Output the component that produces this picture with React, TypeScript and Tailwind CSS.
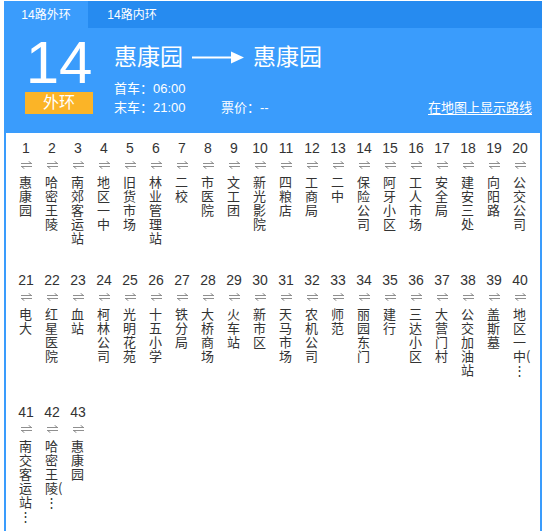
import React from "react";

const stations: { n: number; lines: string[] }[] = [
  "惠康园","哈密王陵","南郊客运站","地区一中","旧货市场","林业管理站","二校","市医院","文工团","新光影院",
  "四粮店","工商局","二中","保险公司","阿牙小区","工人市场","安全局","建安三处","向阳路","公交公司",
  "电大","红星医院","血站","柯林公司","光明花苑","十五小学","铁分局","大桥商场","火车站","新市区",
  "天马市场","农机公司","师范","丽园东门","建行","三达小区","大营门村","公交加油站","盖斯墓","@地,区,一,中(,⋮",
  "@南,交,客,运,站,⋮","@哈,密,王,陵(,⋮","惠康园",
].map((s, i) => ({
  n: i + 1,
  lines: s.startsWith("@") ? s.slice(1).split(",") : s.split(""),
}));

function Swap() {
  return (
    <svg width="11" height="8" viewBox="0 0 11 8" fill="none" stroke="#8f8f8f" strokeWidth="1">
      <path d="M0 2.5H11M10.5 2.5L7.5 0.2" />
      <path d="M11 5.5H0M0.5 5.5L3.5 7.8" />
    </svg>
  );
}

function LongArrow() {
  return (
    <svg width="52" height="13" viewBox="0 0 52 13">
      <rect x="0" y="5.5" width="42" height="2" fill="#fff" />
      <path d="M39 0.5L52 6.5L39 12.5Z" fill="#fff" />
    </svg>
  );
}

export default function App() {
  return (
    <div className="ml-[4px] mt-[1px] w-[538px] font-['Liberation_Sans','Noto_Sans_CJK_SC',sans-serif]">
      {/* tabs */}
      <div className="flex h-[27px] bg-[#268bf0] text-[12px] text-white">
        <div className="flex w-[84px] items-center justify-center bg-[#3a9cfc]">14路外环</div>
        <div className="flex w-[88px] items-center justify-center">14路内环</div>
      </div>
      {/* header */}
      <div className="flex h-[105px] bg-[#3a9cfc] text-white">
        <div className="ml-[21px] flex w-[68px] flex-col items-center pt-[7px]">
          <div className="text-[60px] leading-[56px]">14</div>
          <div className="mt-[1px] flex h-[22px] w-[68px] items-center justify-center bg-[#fbb427] text-[16px]">外环</div>
        </div>
        <div className="ml-[21px] flex flex-1 flex-col pt-[14px] pr-[10px]">
          <div className="flex h-[30px] items-center text-[23px]">
            <span>惠康园</span>
            <span className="mx-[9px] flex items-center"><LongArrow /></span>
            <span>惠康园</span>
          </div>
          <div className="mt-[7px] text-[13px] leading-[19px]">首车：06:00</div>
          <div className="flex text-[13px] leading-[19px]">
            <span className="w-[107px]">末车：21:00</span>
            <span>票价：--</span>
            <span className="ml-auto underline underline-offset-2">在地图上显示路线</span>
          </div>
        </div>
      </div>
      {/* stations */}
      <div className="flex min-h-[398px] flex-wrap border-x-2 border-[#3a9cfc] pl-[8px] pt-[5px] text-[#333]">
        {stations.map((s) => (
          <div key={s.n} className="h-[132px] w-[26px] pl-[5px]">
            <div className="flex w-[14px] flex-col">
              <div className="flex h-[20px] justify-center text-[14px] leading-[20px] font-['Liberation_Sans',sans-serif]">
                {s.n}
              </div>
              <div className="flex h-[14px] items-center justify-center">
                <Swap />
              </div>
              <div className="mt-[3px] flex flex-col text-[13px] leading-[14px] font-['Noto_Sans_CJK_SC',sans-serif]">
                {s.lines.map((c, i) => (
                  <div key={i} className="h-[14px] whitespace-nowrap">{c}</div>
                ))}
              </div>
            </div>
          </div>
        ))}
      </div>
    </div>
  );
}
